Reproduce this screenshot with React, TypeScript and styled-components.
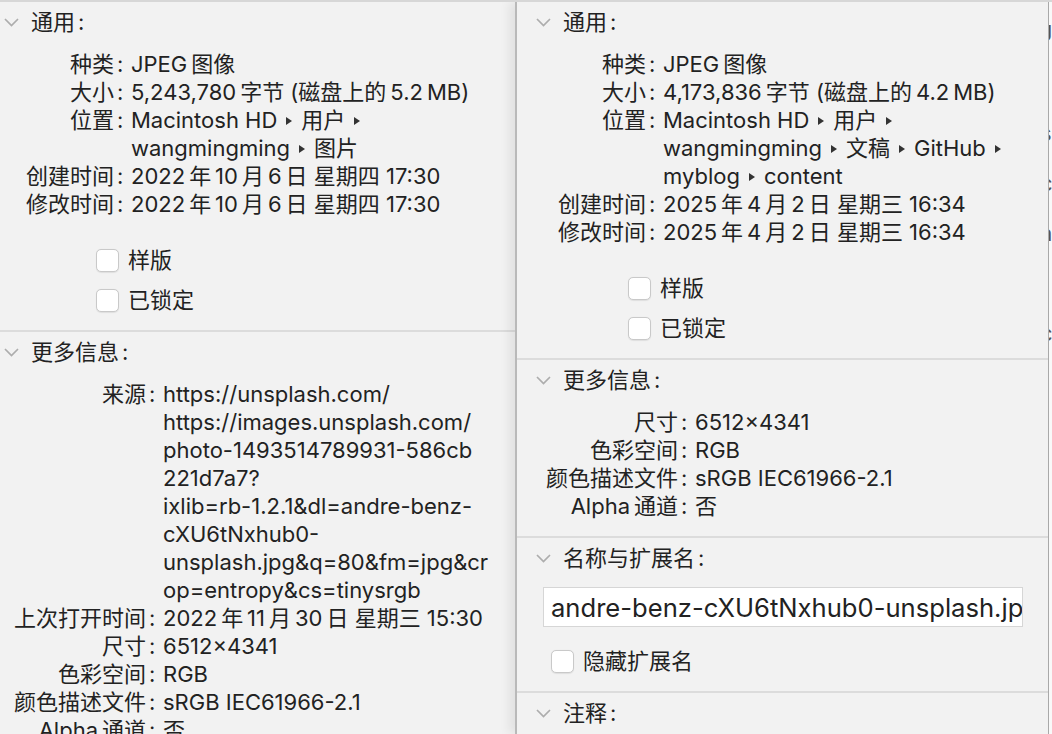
import React from 'react';
import styled, { createGlobalStyle } from 'styled-components';

const GlobalStyle = createGlobalStyle`
  html, body {
    margin: 0;
    padding: 0;
  }
  body {
    background: #f2f2f2;
    font-family: 'Inter', 'Noto Sans CJK SC', sans-serif;
    color: #222;
    -webkit-font-smoothing: antialiased;
  }
`;

const Page = styled.div`
  position: relative;
  display: flex;
  height: 734px;
  overflow: hidden;
  box-sizing: border-box;
  border-top: 2px solid #d7d7d7;
`;

const Panel = styled.div<{ $front?: boolean }>`
  flex: none;
  width: ${(p) => (p.$front ? 531 : 530)}px;
  margin-left: ${(p) => (p.$front ? 0 : -15)}px;
  background: #f2f2f2;
  font-size: 22px;
  line-height: 28px;
  ${(p) =>
    p.$front &&
    `
    border-left: 2px solid #b9b9b9;
    box-shadow: -6px 0 10px rgba(0, 0, 0, 0.07);
  `}
`;

const BackWindow = styled.div`
  flex: 1;
  border-left: 1px solid #a9a9a9;
  background: #f9f9f9;
  overflow: hidden;
  font-size: 22px;
  line-height: 50px;
  color: #555;
  padding-top: 6px;

  span {
    display: block;
    margin-left: -9px;
  }
`;

const Section = styled.div<{ $bottom: number; $last?: boolean }>`
  padding: 6px 0 ${(p) => p.$bottom}px;
  border-bottom: ${(p) => (p.$last ? 'none' : '2px solid #dcdcdc')};
`;

const Header = styled.div`
  display: flex;
  align-items: center;
  height: 28px;
  padding-left: 19px;
  gap: 12px;
  white-space: nowrap;
`;

const InfoGrid = styled.div<{ $labelWidth: number }>`
  display: grid;
  grid-template-columns: ${(p) => p.$labelWidth}px 1fr;
  margin-top: 14px;
`;

const Label = styled.div`
  text-align: right;
  white-space: nowrap;
`;

const Colon = styled.span`
  display: inline-block;
  width: 14px;
  padding-left: 3px;
  text-align: left;
  vertical-align: top;
`;

const Value = styled.div`
  min-width: 0;
  white-space: nowrap;
  overflow: hidden;
`;

const Arrow = styled.span`
  display: inline-block;
  width: 0;
  height: 0;
  margin: 0 9px 2px;
  vertical-align: middle;
  border-left: 6px solid #333;
  border-top: 4px solid transparent;
  border-bottom: 4px solid transparent;
`;

const CheckList = styled.div<{ $indent: number; $top: number }>`
  margin-top: ${(p) => p.$top}px;
  padding-left: ${(p) => p.$indent}px;
`;

const CheckRow = styled.label`
  display: flex;
  align-items: center;
  height: 40px;
  gap: 9px;
  white-space: nowrap;
`;

const Box = styled.span`
  flex: none;
  width: 23px;
  height: 23px;
  box-sizing: border-box;
  border: 1px solid #c9c9c9;
  border-radius: 5px;
  background: #fff;
  box-shadow: 0 0.5px 1px rgba(0, 0, 0, 0.08);
`;

const NameField = styled.input`
  display: block;
  box-sizing: border-box;
  width: 480px;
  height: 40px;
  margin: 15px 0 0 26px;
  padding: 0 0 0 7px;
  border: 1px solid #d6d6d6;
  background: #fff;
  font: 25.6px 'Inter', sans-serif;
  color: #222;
  outline: none;
`;

const Overlay = styled.div`
  position: absolute;
  inset: 0;
  pointer-events: none;
  overflow: hidden;
`;

const Watermark = styled.span<{ $x: number; $y: number }>`
  position: absolute;
  left: ${(p) => p.$x}px;
  top: ${(p) => p.$y}px;
  transform: rotate(-31deg);
  transform-origin: left bottom;
  font-size: 24px;
  white-space: nowrap;
  color: rgba(0, 0, 0, 0.025);
`;

const Chevron = () => (
  <svg width="15" height="9" viewBox="0 0 15 9">
    <polyline points="1,1 7.5,7.5 14,1" fill="none" stroke="#adadad" strokeWidth="1.7" />
  </svg>
);

type Row = { label: string; lines: React.ReactNode[] };

const InfoRows = ({ rows, labelWidth }: { rows: Row[]; labelWidth: number }) => (
  <InfoGrid $labelWidth={labelWidth}>
    {rows.map((row) => (
      <React.Fragment key={row.label}>
        <Label>
          {row.label}
          <Colon>:</Colon>
        </Label>
        <Value>
          {row.lines.map((line, i) => (
            <div key={i}>{line}</div>
          ))}
        </Value>
      </React.Fragment>
    ))}
  </InfoGrid>
);

const Checks = ({ items, indent, top }: { items: string[]; indent: number; top: number }) => (
  <CheckList $indent={indent} $top={top}>
    {items.map((item) => (
      <CheckRow key={item}>
        <Box />
        {item}
      </CheckRow>
    ))}
  </CheckList>
);

const date = (y: string, m: string, d: string, w: string, t: string) =>
  `${y}\u2009年\u2009${m}\u2009月\u2009${d}\u2009日 星期${w} ${t}`;

const leftGeneral: Row[] = [
  { label: '种类', lines: ['JPEG\u2009图像'] },
  { label: '大小', lines: ['5,243,780\u2009字节 (磁盘上的\u20095.2\u2009MB)'] },
  {
    label: '位置',
    lines: [
      <>Macintosh HD<Arrow />用户<Arrow /></>,
      <>wangmingming<Arrow />图片</>,
    ],
  },
  { label: '创建时间', lines: [date('2022', '10', '6', '四', '17:30')] },
  { label: '修改时间', lines: [date('2022', '10', '6', '四', '17:30')] },
];

const leftMore: Row[] = [
  {
    label: '来源',
    lines: [
      'https://unsplash.com/',
      'https://images.unsplash.com/',
      'photo-1493514789931-586cb',
      '221d7a7?',
      'ixlib=rb-1.2.1&dl=andre-benz-',
      'cXU6tNxhub0-',
      'unsplash.jpg&q=80&fm=jpg&cr',
      'op=entropy&cs=tinysrgb',
    ],
  },
  { label: '上次打开时间', lines: [date('2022', '11', '30', '三', '15:30')] },
  { label: '尺寸', lines: ['6512×4341'] },
  { label: '色彩空间', lines: ['RGB'] },
  { label: '颜色描述文件', lines: ['sRGB IEC61966-2.1'] },
  { label: 'Alpha\u2009通道', lines: ['否'] },
];

const rightGeneral: Row[] = [
  { label: '种类', lines: ['JPEG\u2009图像'] },
  { label: '大小', lines: ['4,173,836\u2009字节 (磁盘上的\u20094.2\u2009MB)'] },
  {
    label: '位置',
    lines: [
      <>Macintosh HD<Arrow />用户<Arrow /></>,
      <>wangmingming<Arrow />文稿<Arrow />GitHub<Arrow /></>,
      <>myblog<Arrow />content</>,
    ],
  },
  { label: '创建时间', lines: [date('2025', '4', '2', '三', '16:34')] },
  { label: '修改时间', lines: [date('2025', '4', '2', '三', '16:34')] },
];

const rightMore: Row[] = [
  { label: '尺寸', lines: ['6512×4341'] },
  { label: '色彩空间', lines: ['RGB'] },
  { label: '颜色描述文件', lines: ['sRGB IEC61966-2.1'] },
  { label: 'Alpha\u2009通道', lines: ['否'] },
];

const SectionHeader = ({ title }: { title: string }) => (
  <Header>
    <Chevron />
    <span>
      {title}
      <Colon>:</Colon>
    </span>
  </Header>
);

const App = () => {
  return (
    <>
      <GlobalStyle />
      <Page>
        <Panel>
          <Section $bottom={10}>
            <SectionHeader title="通用" />
            <InfoRows rows={leftGeneral} labelWidth={146} />
            <Checks items={['样版', '已锁定']} indent={111} top={22} />
          </Section>
          <Section $bottom={16} $last>
            <SectionHeader title="更多信息" />
            <InfoRows rows={leftMore} labelWidth={178} />
          </Section>
        </Panel>

        <Panel $front>
          <Section $bottom={10}>
            <SectionHeader title="通用" />
            <InfoRows rows={rightGeneral} labelWidth={146} />
            <Checks items={['样版', '已锁定']} indent={111} top={22} />
          </Section>
          <Section $bottom={16}>
            <SectionHeader title="更多信息" />
            <InfoRows rows={rightMore} labelWidth={178} />
          </Section>
          <Section $bottom={10}>
            <SectionHeader title="名称与扩展名" />
            <NameField readOnly value="andre-benz-cXU6tNxhub0-unsplash.jpg" />
            <Checks items={['隐藏扩展名']} indent={34} top={14} />
          </Section>
          <Section $bottom={10} $last>
            <SectionHeader title="注释" />
          </Section>
        </Panel>

        <BackWindow>
          <span>J</span>
          <span>t</span>
          <span>s</span>
          <span>c</span>
          <span>a</span>
          <span>t</span>
          <span>c</span>
        </BackWindow>

        <Overlay>
          <Watermark $x={-30} $y={520}>2025-04-02 16:40:53</Watermark>
          <Watermark $x={840} $y={520}>2025-04-02 16:40:53</Watermark>
          <Watermark $x={530} $y={640}>wangmm@b5F30 2025-04-02</Watermark>
        </Overlay>
      </Page>
    </>
  );
};

export default App;
